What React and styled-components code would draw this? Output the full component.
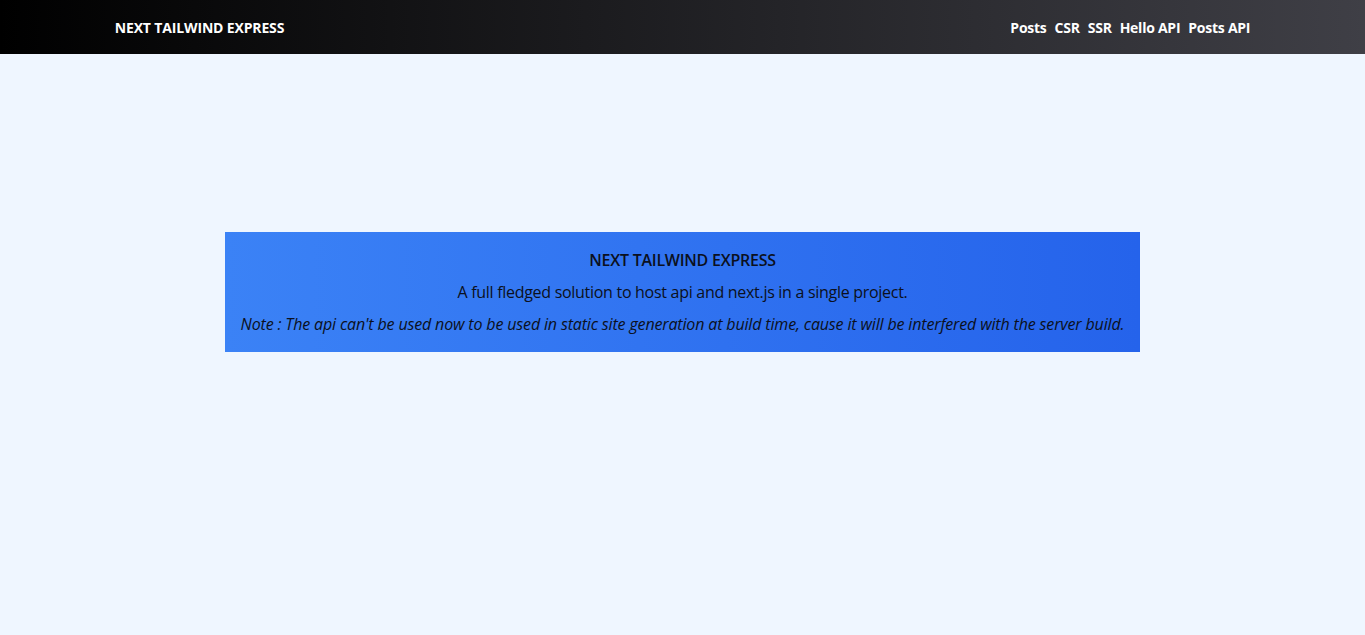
import React from "react";
import styled, { createGlobalStyle } from "styled-components";

const Global = createGlobalStyle`
  html, body { margin: 0; padding: 0; }
  body {
    background: #eff6ff;
    font-family: "Open Sans", "Noto Sans", sans-serif;
    min-height: 635px;
  }
  * { box-sizing: border-box; }
`;

const Header = styled.header`
  height: 54px;
  background: linear-gradient(to right, #000000, #3f3f46);
  display: flex;
  justify-content: center;
`;

const HeaderInner = styled.div`
  width: 83.3333%;
  display: flex;
  align-items: center;
  justify-content: space-between;
  padding: 0 1px;
`;

const Logo = styled.a`
  color: #ffffff;
  font-weight: 700;
  font-size: 14px;
  letter-spacing: -0.15px;
  text-decoration: none;
`;

const Nav = styled.nav`
  display: flex;
  gap: 8px;
`;

const NavLink = styled.a`
  color: #ffffff;
  font-weight: 700;
  font-size: 14px;
  letter-spacing: -0.25px;
  text-decoration: none;
`;

const Main = styled.main`
  display: flex;
  justify-content: center;
  padding-top: 178px;
`;

const Card = styled.section`
  width: fit-content;
  padding: 16px;
  background: linear-gradient(to right, #3b82f6, #2563eb);
  display: flex;
  flex-direction: column;
  gap: 8px;
  text-align: center;
  color: #0b1020;
`;

const Line = styled.p`
  margin: 0;
  font-size: 16px;
  line-height: 24px;
  font-weight: ${(p) => (p.$bold ? 600 : 400)};
  font-style: ${(p) => (p.$italic ? "italic" : "normal")};
  letter-spacing: ${(p) => (p.$bold ? "-0.25px" : p.$italic ? "-0.15px" : "-0.29px")};
  white-space: nowrap;
`;

export default function App() {
  return (
    <>
      <Global />
      <Header>
        <HeaderInner>
          <Logo href="#">NEXT TAILWIND EXPRESS</Logo>
          <Nav>
            <NavLink href="#">Posts</NavLink>
            <NavLink href="#">CSR</NavLink>
            <NavLink href="#">SSR</NavLink>
            <NavLink href="#">Hello API</NavLink>
            <NavLink href="#">Posts API</NavLink>
          </Nav>
        </HeaderInner>
      </Header>
      <Main>
        <Card>
          <Line $bold>NEXT TAILWIND EXPRESS</Line>
          <Line>A full fledged solution to host api and next.js in a single project.</Line>
          <Line $italic>
            Note : The api can't be used now to be used in static site generation at build time, cause it will be interfered with the server build.
          </Line>
        </Card>
      </Main>
    </>
  );
}
